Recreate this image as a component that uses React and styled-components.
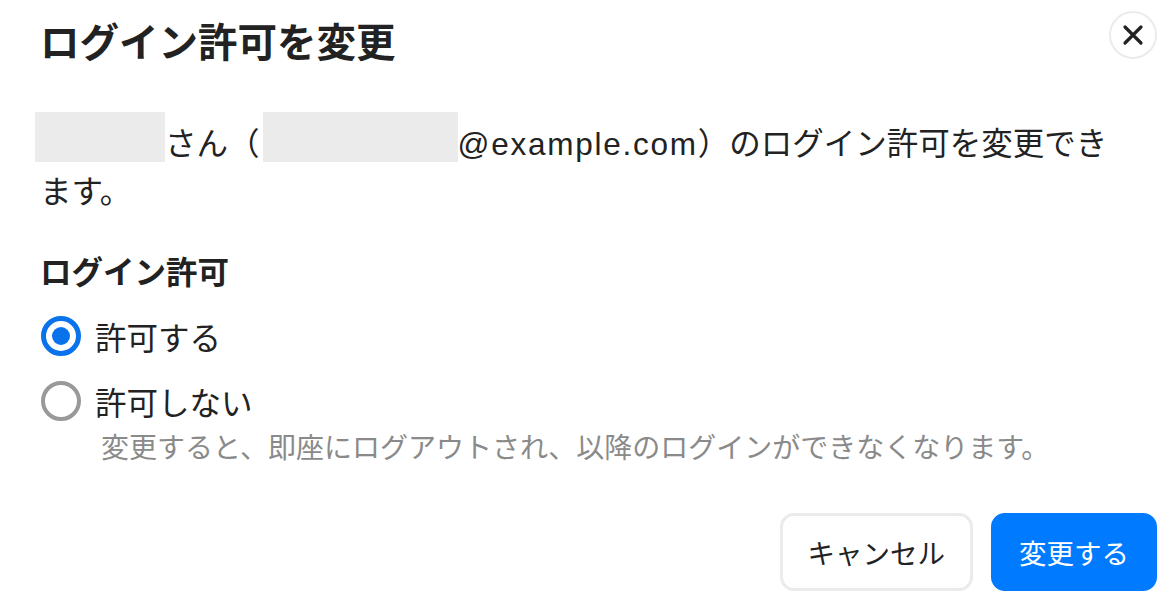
import { useState } from "react";
import styled, { createGlobalStyle } from "styled-components";

const GlobalStyle = createGlobalStyle`
  body {
    margin: 0;
    background: #fff;
    font-family: "Liberation Sans", "Noto Sans CJK JP", sans-serif;
    color: #222;
  }
`;

function App() {
  const [allow, setAllow] = useState("yes");

  return (
    <Dialog>
      <GlobalStyle />
      <Header>
        <Title>ログイン許可を変更</Title>
        <CloseButton aria-label="閉じる">
          <svg width="22" height="22" viewBox="0 0 22 22">
            <path d="M3 3 L19 19 M19 3 L3 19" stroke="#222" strokeWidth="3.2" strokeLinecap="round" />
          </svg>
        </CloseButton>
      </Header>

      <Description>
        <Redacted $width="130px" $offset="-5px" />
        さん（
        <Redacted $width="195px" $offset="3px" />
        <Latin>@example.com</Latin>）のログイン許可を変更できます。
      </Description>

      <Section>
        <Label>ログイン許可</Label>
        <Options>
          <Option>
            <Radio
              type="radio"
              name="allow"
              checked={allow === "yes"}
              onChange={() => setAllow("yes")}
            />
            許可する
          </Option>
          <Option>
            <Radio
              type="radio"
              name="allow"
              checked={allow === "no"}
              onChange={() => setAllow("no")}
            />
            許可しない
          </Option>
        </Options>
        <Hint>変更すると、即座にログアウトされ、以降のログインができなくなります。</Hint>
      </Section>

      <Footer>
        <Button>キャンセル</Button>
        <Button $primary>変更する</Button>
      </Footer>
    </Dialog>
  );
}

const Dialog = styled.div`
  width: 1175px;
  height: 610px;
  box-sizing: border-box;
  padding: 11px 18px 0 40px;
  display: flex;
  flex-direction: column;
`;

const Header = styled.div`
  display: flex;
  justify-content: space-between;
  align-items: flex-start;
`;

const Title = styled.h1`
  margin: 7px 0 0;
  font-size: 39.5px;
  line-height: 1.3;
  font-weight: 700;
  color: #222;
`;

const CloseButton = styled.button`
  width: 48px;
  height: 48px;
  border-radius: 50%;
  border: 2px solid #ebebeb;
  background: #fff;
  display: flex;
  align-items: center;
  justify-content: center;
  padding: 0;
  cursor: pointer;
`;

const Description = styled.p`
  margin: 43px 30px 0 0;
  font-size: 31.5px;
  line-height: 48px;
  color: #222;
`;

const Latin = styled.span`
  letter-spacing: 1.75px;
`;

const Redacted = styled.span`
  display: inline-block;
  width: ${(p) => p.$width};
  height: 50px;
  margin-left: ${(p) => p.$offset || "0"};
  background: #ebebeb;
  vertical-align: -7px;
`;

const Section = styled.div`
  margin-top: 34px;
  display: flex;
  flex-direction: column;
`;

const Label = styled.div`
  font-size: 31.5px;
  font-weight: 700;
  line-height: 47px;
`;

const Options = styled.div`
  margin-top: 15px;
  display: flex;
  flex-direction: column;
  gap: 17px;
`;

const Option = styled.label`
  display: flex;
  align-items: center;
  gap: 14px;
  height: 48px;
  font-size: 31.5px;
  cursor: pointer;
`;

const Radio = styled.input`
  appearance: none;
  margin: 0 0 0 1px;
  width: 40px;
  height: 40px;
  box-sizing: border-box;
  border-radius: 50%;
  border: 4px solid #999;
  background: #fff;
  display: grid;
  place-items: center;

  &:checked {
    border: 5px solid #0a73eb;
  }

  &:checked::after {
    content: "";
    width: 18px;
    height: 18px;
    border-radius: 50%;
    background: #0a73eb;
  }
`;

const Hint = styled.div`
  margin-top: 4px;
  padding-left: 61px;
  font-size: 28px;
  line-height: 40px;
  color: #8a8a8a;
`;

const Footer = styled.div`
  margin-top: 44px;
  display: flex;
  justify-content: flex-end;
  gap: 18px;
`;

const Button = styled.button`
  height: 78px;
  box-sizing: border-box;
  padding: 0 25px;
  border-radius: 14px;
  font-family: inherit;
  font-size: 27.5px;
  cursor: pointer;
  border: 3px solid ${(p) => (p.$primary ? "#007bff" : "#ebebeb")};
  background: ${(p) => (p.$primary ? "#007bff" : "#fff")};
  color: ${(p) => (p.$primary ? "#fff" : "#222")};
`;

export default App;
